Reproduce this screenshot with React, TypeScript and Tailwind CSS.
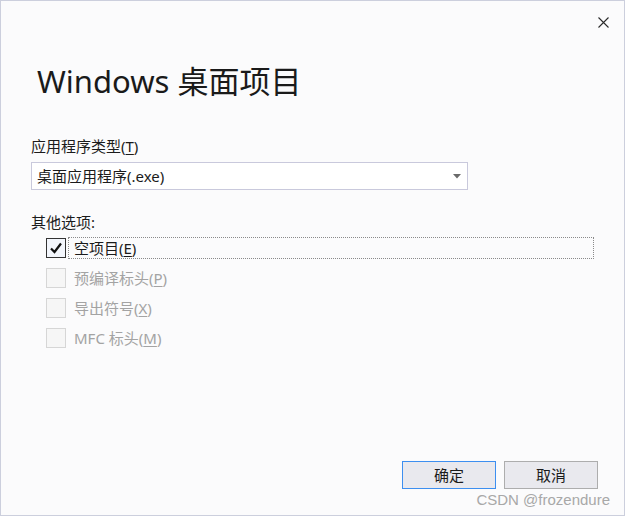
import { ReactNode } from "react"

const font = "font-['Segoe_UI','Noto_Sans','Noto_Sans_CJK_SC',sans-serif]"

function CloseIcon() {
  return (
    <svg width="11" height="11" viewBox="0 0 11 11" className="block">
      <path d="M0.5 0.5 L10.5 10.5 M10.5 0.5 L0.5 10.5" stroke="#2b2b2b" strokeWidth="1.1" fill="none" />
    </svg>
  )
}

function Mn({ children }: { children: ReactNode }) {
  return <span className="underline underline-offset-2">{children}</span>
}

function CheckRow({
  label,
  checked,
  disabled,
  focused,
}: {
  label: ReactNode
  checked?: boolean
  disabled?: boolean
  focused?: boolean
}) {
  return (
    <div className="flex h-[30px] items-center pl-[15px]">
      <div
        className={
          disabled
            ? "flex h-[20px] w-[20px] items-center justify-center border border-[#d6d6d6] bg-[#f6f6f6]"
            : "flex h-[20px] w-[20px] items-center justify-center border border-[#333333] bg-[#f3f6fc]"
        }
      >
        {checked && (
          <svg width="14" height="14" viewBox="0 0 14 14">
            <path d="M2 7.5 L5.5 11 L12 2.5" stroke="#111" strokeWidth="2.2" fill="none" />
          </svg>
        )}
      </div>
      <div
        className={
          focused
            ? "ml-[2px] flex h-[22px] flex-1 items-center border border-dotted border-[#8a8a8a] pl-[5px] text-[15px] text-[#1b1b1b]"
            : "ml-[2px] flex h-[22px] flex-1 items-center pl-[6px] text-[15px] text-[#a3a3a3]"
        }
      >
        {label}
      </div>
    </div>
  )
}

export default function App() {
  return (
    <div className={`relative flex h-[516px] w-[625px] flex-col border border-[#cccfdd] bg-[#fbfbfc] ${font}`}>
      <div className="flex h-[42px] items-center justify-end pr-[15px]">
        <CloseIcon />
      </div>

      <div className="flex flex-col pl-[30px] pr-[30px]">
        <h1 className="ml-[6px] mt-[18px] h-[40px] text-[31px] leading-[40px] font-normal text-[#1a1a1a]">
          Windows 桌面项目
        </h1>

        <div className="mt-[35px] h-[20px] text-[15px] leading-[20px] text-[#1b1b1b]">
          应用程序类型(<Mn>T</Mn>)
        </div>

        <div className="mt-[6px] flex h-[28px] w-[437px] items-center justify-between border border-[#c9c9dc] bg-white pl-[5px] pr-[6px] text-[15px] text-[#1b1b1b]">
          <span>桌面应用程序(.exe)</span>
          <svg width="8" height="5" viewBox="0 0 8 5">
            <path d="M0 0 H8 L4 4.5 Z" fill="#6a6a6a" />
          </svg>
        </div>

        <div className="mt-[22px] h-[20px] text-[15px] leading-[20px] text-[#1b1b1b]">其他选项:</div>

        <div className="mt-[1px] flex flex-col">
          <CheckRow label={<>空项目(<Mn>E</Mn>)</>} checked focused />
          <CheckRow label={<>预编译标头(<Mn>P</Mn>)</>} disabled />
          <CheckRow label={<>导出符号(<Mn>X</Mn>)</>} disabled />
          <CheckRow label={<>MFC 标头(<Mn>M</Mn>)</>} disabled />
        </div>
      </div>

      <div className="mt-auto flex justify-end gap-[8px] pb-[26px] pr-[26px]">
        <button className="h-[28px] w-[94px] border border-[#3d8ff0] bg-[#e9e9ee] text-[15px] text-[#1b1b1b]">
          确定
        </button>
        <button className="h-[28px] w-[94px] border border-[#adadad] bg-[#e9e9ee] text-[15px] text-[#1b1b1b]">
          取消
        </button>
      </div>

      <div className="absolute right-[14px] bottom-[7px] font-['Liberation_Sans',Arial,sans-serif] text-[15px] leading-[16px] text-[#a8a8a8]">
        CSDN @frozendure
      </div>
    </div>
  )
}
